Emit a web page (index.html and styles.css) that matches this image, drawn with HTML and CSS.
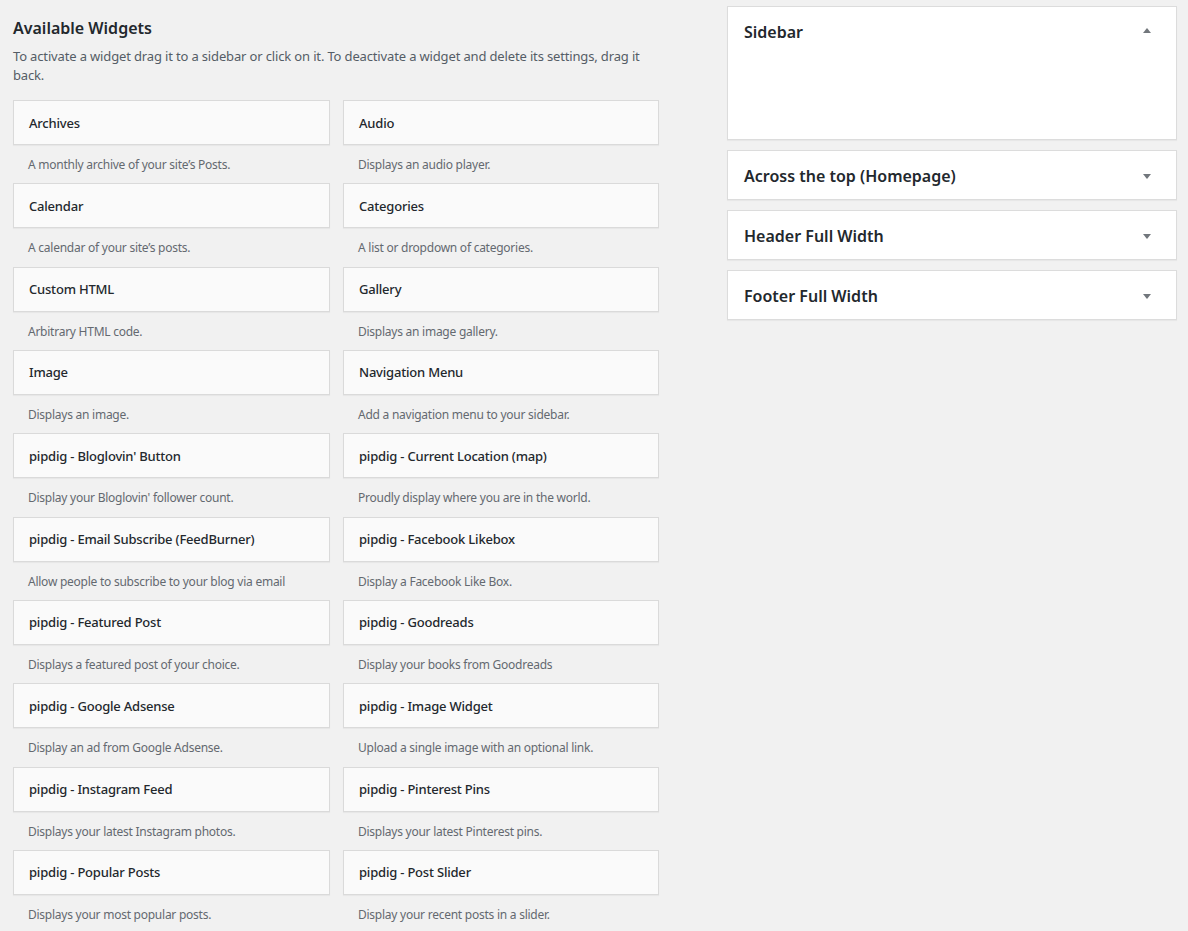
FILE: index.html
```html
<!DOCTYPE html>
<html>
<head>
<meta charset="utf-8">
<link rel="stylesheet" href="styles.css">
</head>
<body>
<div class="page">
  <section class="available">
    <h2 class="avail-title">Available Widgets</h2>
    <p class="avail-desc">To activate a widget drag it to a sidebar or click on it. To deactivate a widget and delete its settings, drag it back.</p>
    <div class="widget-grid">
      <div class="widget"><div class="widget-top">Archives</div><div class="widget-desc">A monthly archive of your site’s Posts.</div></div>
      <div class="widget"><div class="widget-top">Audio</div><div class="widget-desc">Displays an audio player.</div></div>
      <div class="widget"><div class="widget-top">Calendar</div><div class="widget-desc">A calendar of your site’s posts.</div></div>
      <div class="widget"><div class="widget-top">Categories</div><div class="widget-desc">A list or dropdown of categories.</div></div>
      <div class="widget"><div class="widget-top">Custom HTML</div><div class="widget-desc">Arbitrary HTML code.</div></div>
      <div class="widget"><div class="widget-top">Gallery</div><div class="widget-desc">Displays an image gallery.</div></div>
      <div class="widget"><div class="widget-top">Image</div><div class="widget-desc">Displays an image.</div></div>
      <div class="widget"><div class="widget-top">Navigation Menu</div><div class="widget-desc">Add a navigation menu to your sidebar.</div></div>
      <div class="widget"><div class="widget-top">pipdig - Bloglovin' Button</div><div class="widget-desc">Display your Bloglovin' follower count.</div></div>
      <div class="widget"><div class="widget-top">pipdig - Current Location (map)</div><div class="widget-desc">Proudly display where you are in the world.</div></div>
      <div class="widget"><div class="widget-top">pipdig - Email Subscribe (FeedBurner)</div><div class="widget-desc">Allow people to subscribe to your blog via email</div></div>
      <div class="widget"><div class="widget-top">pipdig - Facebook Likebox</div><div class="widget-desc">Display a Facebook Like Box.</div></div>
      <div class="widget"><div class="widget-top">pipdig - Featured Post</div><div class="widget-desc">Displays a featured post of your choice.</div></div>
      <div class="widget"><div class="widget-top">pipdig - Goodreads</div><div class="widget-desc">Display your books from Goodreads</div></div>
      <div class="widget"><div class="widget-top">pipdig - Google Adsense</div><div class="widget-desc">Display an ad from Google Adsense.</div></div>
      <div class="widget"><div class="widget-top">pipdig - Image Widget</div><div class="widget-desc">Upload a single image with an optional link.</div></div>
      <div class="widget"><div class="widget-top">pipdig - Instagram Feed</div><div class="widget-desc">Displays your latest Instagram photos.</div></div>
      <div class="widget"><div class="widget-top">pipdig - Pinterest Pins</div><div class="widget-desc">Displays your latest Pinterest pins.</div></div>
      <div class="widget"><div class="widget-top">pipdig - Popular Posts</div><div class="widget-desc">Displays your most popular posts.</div></div>
      <div class="widget"><div class="widget-top">pipdig - Post Slider</div><div class="widget-desc">Display your recent posts in a slider.</div></div>
    </div>
  </section>
  <aside class="sidebars">
    <div class="holder open">
      <div class="sidebar-name"><h2>Sidebar</h2><span class="arrow up"></span></div>
      <div class="sidebar-drop"></div>
    </div>
    <div class="holder">
      <div class="sidebar-name"><h2>Across the top (Homepage)</h2><span class="arrow down"></span></div>
    </div>
    <div class="holder">
      <div class="sidebar-name"><h2>Header Full Width</h2><span class="arrow down"></span></div>
    </div>
    <div class="holder">
      <div class="sidebar-name"><h2>Footer Full Width</h2><span class="arrow down"></span></div>
    </div>
  </aside>
</div>
</body>
</html>
```
FILE: styles.css
```css
html, body {
  margin: 0;
  padding: 0;
  background: #f1f1f1;
}
body {
  font-family: "Noto Sans", "Open Sans", sans-serif;
  color: #23282d;
  overflow: hidden;
}
.page {
  display: flex;
  align-items: flex-start;
  padding: 0 0 0 13px;
  width: 1188px;
  box-sizing: border-box;
}
.available {
  width: 646px;
  flex: none;
}
.avail-title {
  margin: 0;
  padding-top: 17px;
  font-size: 16px;
  line-height: 23px;
  font-weight: 600;
  color: #23282d;
}
.avail-desc {
  margin: 7px 0 0;
  font-size: 13px;
  line-height: 19px;
  color: #555d66;
  letter-spacing: -0.15px;
}
.widget-grid {
  margin-top: 15px;
  display: grid;
  grid-template-columns: 317px 316px;
  column-gap: 13px;
  grid-auto-rows: 83.33px;
}
.widget-top {
  height: 45px;
  box-sizing: border-box;
  border: 1px solid #dadada;
  background: #fafafa;
  padding: 0 15px;
  display: flex;
  align-items: center;
  font-size: 13px;
  font-weight: 500;
  color: #23282d;
  letter-spacing: -0.2px;
  box-shadow: 0 1px 1px rgba(0,0,0,.04);
}
.widget-desc {
  padding: 11px 15px 0;
  font-size: 12px;
  line-height: 18px;
  color: #646970;
  letter-spacing: -0.25px;
}
.sidebars {
  margin-left: 68px;
  width: 450px;
  flex: none;
  padding-top: 6px;
  display: flex;
  flex-direction: column;
  gap: 10px;
}
.holder {
  background: #fff;
  border: 1px solid #dcdcdc;
  box-shadow: 0 1px 1px rgba(0,0,0,.04);
}
.sidebar-name {
  height: 48px;
  box-sizing: border-box;
  display: flex;
  align-items: center;
  justify-content: space-between;
  padding: 2px 25px 0 16px;
}
.open .sidebar-name {
  height: 50px;
  align-items: flex-start;
  padding-top: 13px;
}
.sidebar-name h2 {
  margin: 0;
  font-size: 16px;
  line-height: 24px;
  font-weight: 600;
  color: #23282d;
}
.arrow {
  width: 0;
  height: 0;
  border-left: 4px solid transparent;
  border-right: 4px solid transparent;
}
.arrow.down {
  border-top: 5px solid #72777c;
}
.arrow.up {
  border-bottom: 5px solid #72777c;
  margin-top: 8px;
}
.sidebar-drop {
  height: 82px;
}
```
